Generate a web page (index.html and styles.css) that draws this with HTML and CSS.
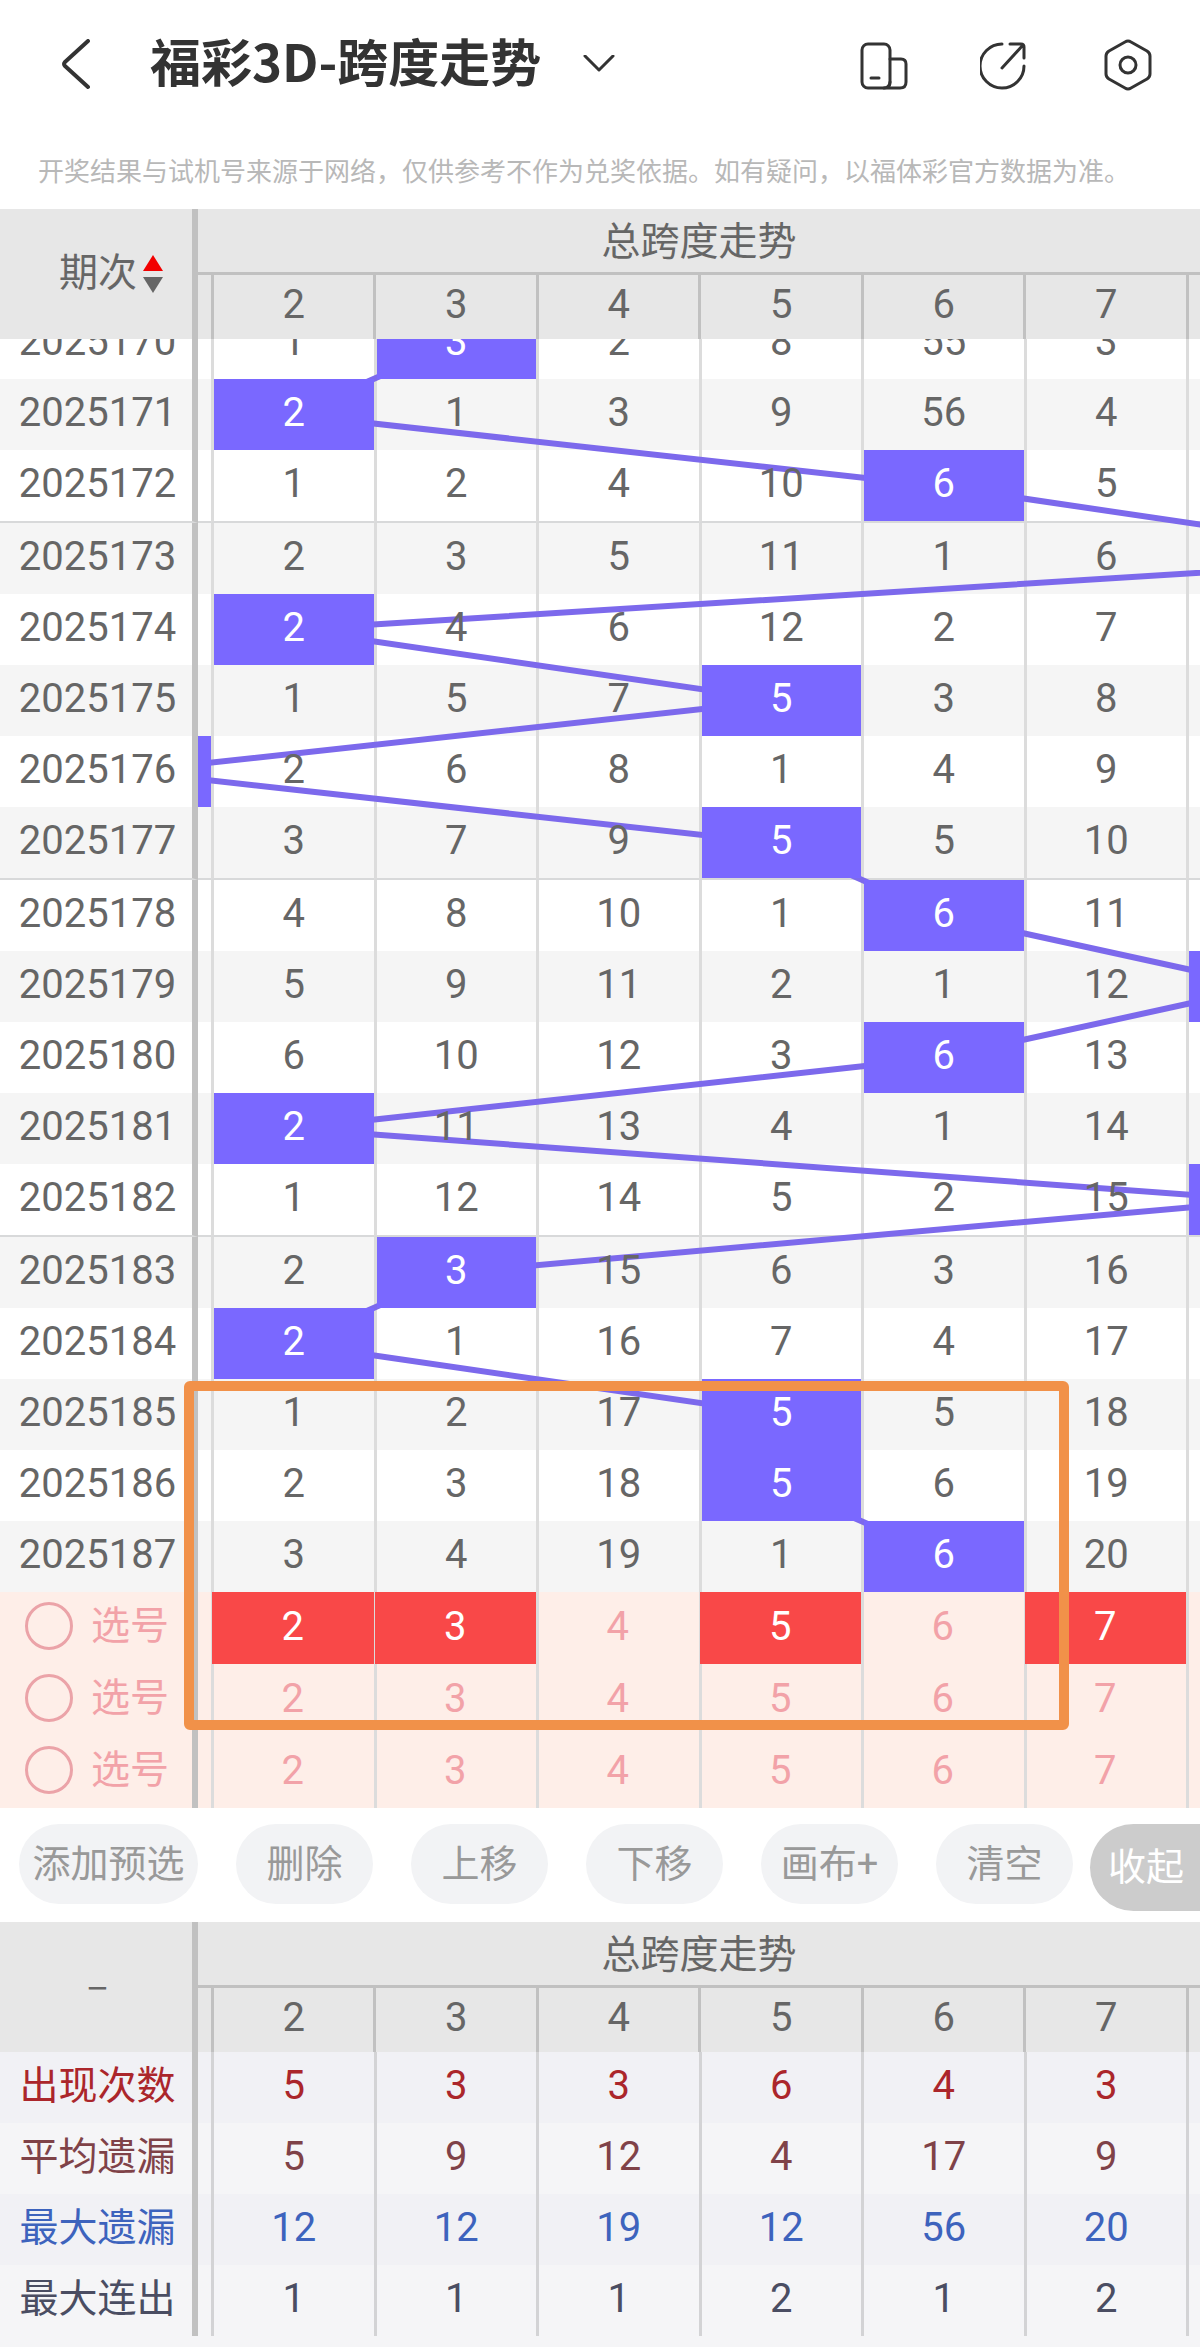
FILE: index.html
```
<!DOCTYPE html>
<html lang="zh-CN">
<head>
    <meta charset="UTF-8">
    <meta name="viewport" content="width=device-width, initial-scale=1.0">
    <title>福彩3D-跨度走势</title>
    <link rel="stylesheet" href="styles.css">
</head>
<body>

    <header class="top-bar">
        <button class="icon-btn" aria-label="返回">
            <svg width="32" height="52" viewBox="0 0 32 52"><path d="M28 2 L5 23 Q3 25 5 27 L28 48" stroke-width="4"/></svg>
        </button>
        <h1>福彩3D-跨度走势</h1>
        <button class="icon-btn" aria-label="切换走势">
            <svg width="32" height="20" viewBox="0 0 32 20"><path d="M2 1 L16 15 L30 1" stroke-width="3"/></svg>
        </button>
        <div class="actions">
            <button class="icon-btn" aria-label="横屏">
                <svg width="48" height="52" viewBox="0 0 48 52">
                    <rect x="2" y="5" width="28" height="44" rx="6"/>
                    <path d="M30 20 H41 Q46 20 46 25 V43 Q46 49 40 49 H24 M11 39 H19 M30 43 Q30 48 26 49"/>
                </svg>
            </button>
            <button class="icon-btn" aria-label="分享">
                <svg width="48" height="52" viewBox="0 0 48 52">
                    <path d="M22 5 A22 22 0 1 0 44 27 M22 29 L43 6 M30 5 H41 Q44 5 44 8 V19"/>
                </svg>
            </button>
            <button class="icon-btn" aria-label="设置">
                <svg width="56" height="52" viewBox="0 0 56 52">
                    <path d="M25 3 Q28 1 31 3 L47 12 Q50 14 50 17 V35 Q50 38 47 40 L31 49 Q28 51 25 49 L9 40 Q6 38 6 35 V17 Q6 14 9 12 Z"/>
                    <circle cx="28" cy="26" r="8"/>
                </svg>
            </button>
        </div>
    </header>

    <p class="notice">开奖结果与试机号来源于网络，仅供参考不作为兑奖依据。如有疑问，以福体彩官方数据为准。</p>

    <table class="grid grid-head">
        <colgroup><col class="col-label"><col class="col-prev"><col span="6"><col class="col-next"></colgroup>
        <thead>
            <tr>
                <th class="label" rowspan="2">
                    <button class="sort-btn">
                        <span class="head-text">期次</span>
                        <svg width="20" height="40" viewBox="0 0 20 40"><path d="M10 1 L20 17 H0 Z" fill="#f20000"/><path d="M0 23 H20 L10 39 Z" fill="#666"/></svg>
                    </button>
                </th>
                <th class="group-title" colspan="8">总跨度走势</th>
            </tr>
            <tr class="numbers"><th></th><th>2</th><th>3</th><th>4</th><th>5</th><th>6</th><th>7</th><th></th></tr>
        </thead>
    </table>

    <div class="trend" id="trend">
        <table class="grid grid-body">
            <colgroup><col class="col-label"><col class="col-prev"><col span="6"><col class="col-next"></colgroup>
            <tbody id="draws"></tbody>
            <tbody id="picks"></tbody>
        </table>
        <svg class="lines" id="lines"></svg>
        <div class="frame"></div>
    </div>

    <div class="toolbar">
        <div class="pills">
            <button class="pill wide">添加预选</button>
            <button class="pill">删除</button>
            <button class="pill">上移</button>
            <button class="pill">下移</button>
            <button class="pill">画布+</button>
            <button class="pill">清空</button>
        </div>
        <button class="collapse">收起</button>
    </div>

    <table class="grid grid-head">
        <colgroup><col class="col-label"><col class="col-prev"><col span="6"><col class="col-next"></colgroup>
        <thead>
            <tr>
                <th class="label" rowspan="2"><span class="head-text">–</span></th>
                <th class="group-title" colspan="8">总跨度走势</th>
            </tr>
            <tr class="numbers"><th></th><th>2</th><th>3</th><th>4</th><th>5</th><th>6</th><th>7</th><th></th></tr>
        </thead>
    </table>
    <table class="grid grid-body summary">
        <colgroup><col class="col-label"><col class="col-prev"><col span="6"><col class="col-next"></colgroup>
        <tbody id="summary"></tbody>
    </table>

    <script>
        // issue, winning span, omission counts for columns 2-7
        const draws = [
            [2025170, 3, [1, 3, 2, 8, 55, 3]],
            [2025171, 2, [2, 1, 3, 9, 56, 4]],
            [2025172, 6, [1, 2, 4, 10, 6, 5]],
            [2025173, 9, [2, 3, 5, 11, 1, 6]],
            [2025174, 2, [2, 4, 6, 12, 2, 7]],
            [2025175, 5, [1, 5, 7, 5, 3, 8]],
            [2025176, 1, [2, 6, 8, 1, 4, 9]],
            [2025177, 5, [3, 7, 9, 5, 5, 10]],
            [2025178, 6, [4, 8, 10, 1, 6, 11]],
            [2025179, 8, [5, 9, 11, 2, 1, 12]],
            [2025180, 6, [6, 10, 12, 3, 6, 13]],
            [2025181, 2, [2, 11, 13, 4, 1, 14]],
            [2025182, 8, [1, 12, 14, 5, 2, 15]],
            [2025183, 3, [2, 3, 15, 6, 3, 16]],
            [2025184, 2, [2, 1, 16, 7, 4, 17]],
            [2025185, 5, [1, 2, 17, 5, 5, 18]],
            [2025186, 5, [2, 3, 18, 5, 6, 19]],
            [2025187, 6, [3, 4, 19, 1, 6, 20]]
        ];
        const picks = [[2, 3, 5, 7], [], []];
        const summary = [
            ['出现次数', 'count', [5, 3, 3, 6, 4, 3]],
            ['平均遗漏', 'average', [5, 9, 12, 4, 17, 9]],
            ['最大遗漏', 'longest', [12, 12, 19, 12, 56, 20]],
            ['最大连出', 'streak', [1, 1, 1, 2, 1, 2]]
        ];

        function cell(text, hit) {
            return `<td><span class="${hit ? 'value hit' : 'value'}">${text}</span></td>`;
        }

        document.getElementById('draws').innerHTML = draws.map(([issue, hit, values]) => {
            const cells = values.map((v, i) => cell(v, hit === i + 2)).join('');
            // a rule closes every block of five draws
            const cls = issue % 5 === 2 && issue !== 2025187 ? 'block-end' : '';
            return `<tr class="${cls}"><th class="label">${issue}</th>${cell('', hit === 1)}${cells}${cell('', hit === 8)}</tr>`;
        }).join('');

        document.getElementById('picks').innerHTML = picks.map((chosen, row) => {
            const cells = [2, 3, 4, 5, 6, 7].map(n => {
                const on = chosen.includes(n);
                return `<td><button class="pick" aria-pressed="${on}">${n}</button></td>`;
            }).join('');
            return `<tr><th class="label"><label class="pick-label"><input type="radio" name="pick-row" value="${row}">选号</label></th><td></td>${cells}<td></td></tr>`;
        }).join('');

        document.getElementById('summary').innerHTML = summary.map(([name, cls, values]) =>
            `<tr class="${cls}"><th class="label">${name}</th><td></td>${values.map(v => cell(v)).join('')}<td></td></tr>`
        ).join('');

        document.getElementById('picks').addEventListener('click', e => {
            if (e.target.classList.contains('pick')) {
                e.target.setAttribute('aria-pressed', e.target.getAttribute('aria-pressed') !== 'true');
            }
        });

        function drawLines() {
            const svg = document.getElementById('lines');
            const box = svg.getBoundingClientRect();
            const rows = document.querySelectorAll('#draws tr');
            const first = rows[0].children[2].getBoundingClientRect();
            const last = rows[0].children[7].getBoundingClientRect();
            const step = (last.left - first.left) / 5;
            const points = draws.map(([, hit], i) => {
                const r = rows[i].children[2].getBoundingClientRect();
                const x = first.left + step * (hit - 1.5) - box.left;
                return `${x},${r.top + r.height / 2 - box.top}`;
            });
            svg.innerHTML = `<polyline points="${points.join(' ')}"/>`;
        }

        drawLines();
        window.addEventListener('resize', drawLines);
    </script>
</body>
</html>
```
FILE: styles.css
```
* {
    box-sizing: border-box;
}

body {
    margin: 0;
    background-color: #f5f5f7;
    color: #666;
    font-family: Roboto, "Noto Sans CJK SC", sans-serif;
    overflow-x: hidden;
}

button {
    border: none;
    padding: 0;
    background: none;
    color: inherit;
    font: inherit;
    cursor: pointer;
}

/* Header */
.top-bar {
    display: flex;
    align-items: center;
    height: 130px;
    padding: 0 44px 0 60px;
    background-color: #fff;
    color: #333;
}

.top-bar h1 {
    margin: 0 42px 0 58px;
    padding-bottom: 10px;
    font-family: "Noto Sans CJK SC", sans-serif;
    font-size: 51px;
    line-height: 60px;
    font-weight: 700;
    white-space: nowrap;
}

.icon-btn svg {
    display: block;
    fill: none;
    stroke: #333;
    stroke-width: 3;
    stroke-linecap: round;
    stroke-linejoin: round;
}

.actions {
    display: flex;
    gap: 72px;
    margin-left: auto;
}

.notice {
    margin: 0;
    padding: 20px 38px;
    height: 79px;
    background-color: #fff;
    color: #b8b8b8;
    font-family: "Noto Sans CJK SC", sans-serif;
    font-size: 26px;
    line-height: 40px;
    white-space: nowrap;
}

/* Shared table grid */
.grid {
    width: 100%;
    table-layout: fixed;
    border-collapse: separate;
    border-spacing: 0;
    font-size: 40px;
    line-height: 68px;
    text-align: center;
}

.grid th,
.grid td {
    padding: 0;
    font-weight: 400;
}

.col-label {
    width: 198px;
}

.col-prev {
    width: 13px;
}

.col-next {
    width: 14px;
}

.grid .label {
    padding-left: 3px;
    border-right: 6px solid #c1c1c1;
    white-space: nowrap;
}

.grid-head {
    background-color: #e7e7e7;
}

.grid-head .label,
.grid-head .group-title {
    font-family: "Noto Sans CJK SC", sans-serif;
    font-size: 39px;
}

.grid-head .group-title {
    height: 66px;
    padding-bottom: 5px;
    border-bottom: 3px solid #c1c1c1;
    line-height: 58px;
}

.numbers th {
    height: 64px;
    line-height: 60px;
    padding-bottom: 4px;
}

.numbers th + th {
    border-left: 3px solid #c1c1c1;
}

.head-text {
    display: block;
    padding-bottom: 10px;
}

.sort-btn {
    display: flex;
    align-items: center;
    justify-content: center;
    gap: 6px;
    width: 100%;
    padding-left: 27px;
}

/* Trend rows */
.trend {
    position: relative;
    overflow: hidden;
    background-color: #fff;
}

/* scrolled part way into the first row */
.trend .grid-body {
    margin-top: -31px;
}

.grid-body th,
.grid-body td {
    height: 71px;
    vertical-align: top;
}

.grid-body td + td {
    border-left: 3px solid #dcdcdc;
}

#draws tr:nth-child(even) {
    background-color: #f5f5f5;
}

#draws .block-end th,
#draws .block-end td {
    height: 73px;
    border-bottom: 2px solid #d8d9da;
}

.value,
.pick {
    display: block;
    position: relative;
    z-index: 2;
    width: 100%;
    height: 71px;
    padding-bottom: 3px;
    line-height: 68px;
}

.hit {
    background-color: #7a68ff;
    color: #fff;
}

.lines {
    position: absolute;
    top: 0;
    left: 198px;
    width: calc(100% - 198px);
    height: 100%;
    z-index: 1;
    pointer-events: none;
}

.lines polyline {
    fill: none;
    stroke: #7c69ec;
    stroke-width: 6;
}

.frame {
    position: absolute;
    top: 1042px;
    left: 184px;
    right: 131px;
    height: 349px;
    z-index: 3;
    border: 10px solid #f19149;
    border-radius: 6px;
    pointer-events: none;
}

/* Picks */
#picks tr {
    background-color: #feeee8;
    color: #f2a2a8;
}

.pick {
    width: calc(100% + 2px);
    height: 72px;
    margin-left: -2px;
}

.pick[aria-pressed="true"] {
    background-color: #f94848;
    color: #fff;
}

.pick-label {
    display: flex;
    align-items: center;
    gap: 18px;
    padding-left: 22px;
    font-size: 39px;
}

.pick-label input {
    appearance: none;
    width: 48px;
    height: 48px;
    margin: 0;
    border: 3px solid #eba3a8;
    border-radius: 50%;
}

/* Toolbar */
.toolbar {
    display: flex;
    align-items: flex-start;
    justify-content: space-between;
    height: 114px;
    padding: 16px 0 0 19px;
    background-color: #fff;
    font-size: 38px;
    overflow: hidden;
}

.pills {
    display: flex;
    gap: 38px;
}

.pill {
    flex: none;
    width: 137px;
    height: 80px;
    padding-bottom: 8px;
    border-radius: 40px;
    background-color: #f2f3f5;
    color: #999;
}

.pill.wide {
    width: 179px;
}

.collapse {
    flex: none;
    width: 110px;
    height: 87px;
    padding: 0 16px 8px 18px;
    border-radius: 44px 0 0 44px;
    background-color: #ccc;
    color: #fff;
    white-space: nowrap;
}

/* Summary */
.summary .label {
    font-size: 39px;
}

.summary td + td {
    border-left-color: #d3d3d5;
}

.count {
    background-color: #f1f1f5;
    color: #ab262b;
}

.average {
    color: #7f4248;
}

.longest {
    background-color: #f1f1f5;
    color: #3d63bd;
}

.streak {
    color: #4a4d62;
}
```
